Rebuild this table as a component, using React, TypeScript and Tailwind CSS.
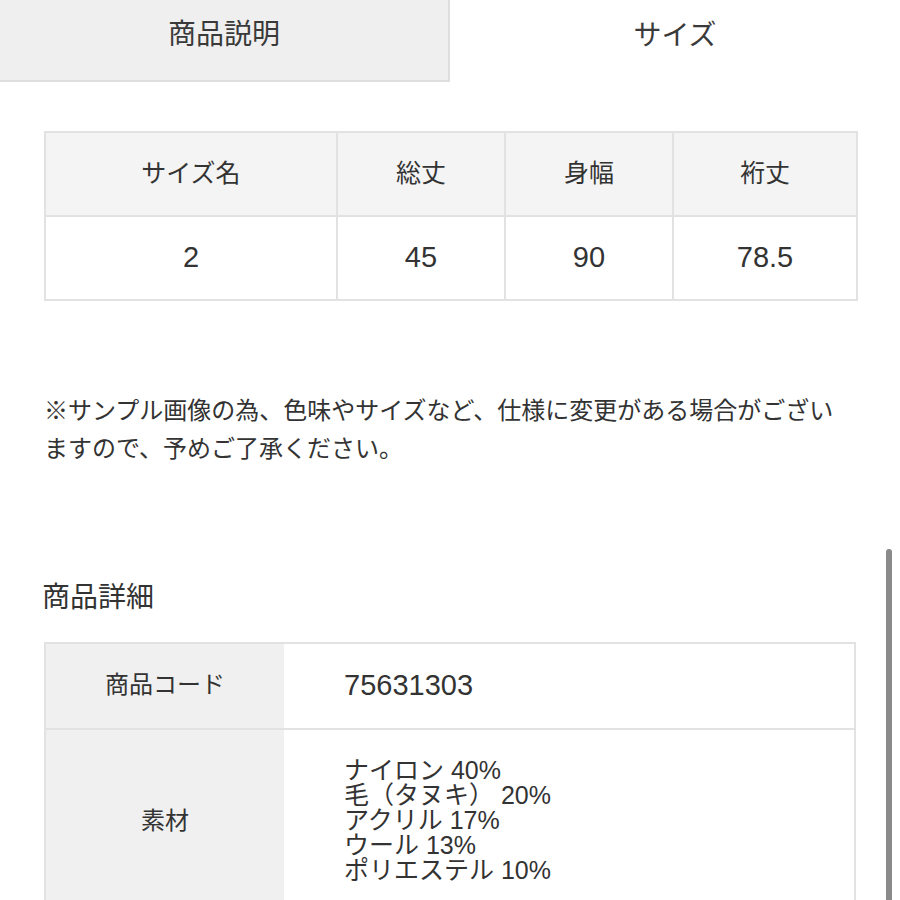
import React from "react";

const font = { fontFamily: '"Liberation Sans", "Noto Sans CJK JP", sans-serif' };

export default function App() {
  const materials = [
    "ナイロン 40%",
    "毛（タヌキ） 20%",
    "アクリル 17%",
    "ウール 13%",
    "ポリエステル 10%",
  ];
  return (
    <div
      className="relative w-[900px] h-[900px] overflow-hidden bg-white text-[#333]"
      style={font}
    >
      {/* Tabs */}
      <div className="flex h-[82px]">
        <div className="w-[450px] h-full flex items-center justify-center bg-[#efefef] border-r-2 border-b-2 border-[#dedede] text-[28px] leading-none pb-[10px] text-[#3a3a3a]">
          商品説明
        </div>
        <div className="flex-1 h-full flex items-center justify-center text-[28px] leading-none pb-[10px] text-[#3a3a3a]">
          サイズ
        </div>
      </div>

      <div className="px-[44px]">
        {/* Size table */}
        <table className="mt-[49px] w-[812px] table-fixed border-collapse">
          <colgroup>
            <col className="w-[292px]" />
            <col className="w-[168px]" />
            <col className="w-[168px]" />
            <col className="w-[184px]" />
          </colgroup>
          <thead>
            <tr className="h-[84px] bg-[#f4f4f4]">
              {["サイズ名", "総丈", "身幅", "裄丈"].map((h) => (
                <th
                  key={h}
                  className="border-2 border-[#e2e2e2] font-normal text-[25px] leading-[30px] pb-[2px] text-center align-middle"
                >
                  {h}
                </th>
              ))}
            </tr>
          </thead>
          <tbody>
            <tr className="h-[84px]">
              {["2", "45", "90", "78.5"].map((v) => (
                <td
                  key={v}
                  className="border-2 border-[#e2e2e2] text-[29px] leading-[32px] pb-[3px] text-center align-middle"
                >
                  {v}
                </td>
              ))}
            </tr>
          </tbody>
        </table>

        {/* Note */}
        <p className="mt-[91px] text-[24px] leading-[38px] text-[#333]">
          ※サンプル画像の為、色味やサイズなど、仕様に変更がある場合がございますので、予めご了承ください。
        </p>

        {/* Heading */}
        <h2 className="mt-[110px] text-[28px] leading-[40px] -ml-[2px] text-[#333]">
          商品詳細
        </h2>

        {/* Detail table */}
        <div className="mt-[24px] w-[812px] border-2 border-[#e2e2e2]">
          <div className="flex h-[86px] border-b-2 border-[#e2e2e2]">
            <div className="w-[238px] bg-[#f0f0f0] flex items-center justify-center text-[24px] leading-[30px] pb-[2px]">
              商品コード
            </div>
            <div className="flex-1 flex items-center pl-[60px] text-[29px] leading-[32px] pb-[2px]">
              75631303
            </div>
          </div>
          <div className="flex">
            <div className="w-[238px] bg-[#f0f0f0] flex items-center justify-center text-[24px] leading-[30px]">
              素材
            </div>
            <div className="flex-1 pl-[60px] pt-[28px] pb-[28px] text-[25px] leading-[25px]">
              {materials.map((m) => (
                <div key={m} className="h-[25px] whitespace-nowrap">
                  {m}
                </div>
              ))}
            </div>
          </div>
        </div>
      </div>

      {/* Scrollbar overlay */}
      <div className="absolute left-[886px] top-[549px] w-[6px] h-[360px] rounded-full bg-[#8a8a8a]" />
    </div>
  );
}
